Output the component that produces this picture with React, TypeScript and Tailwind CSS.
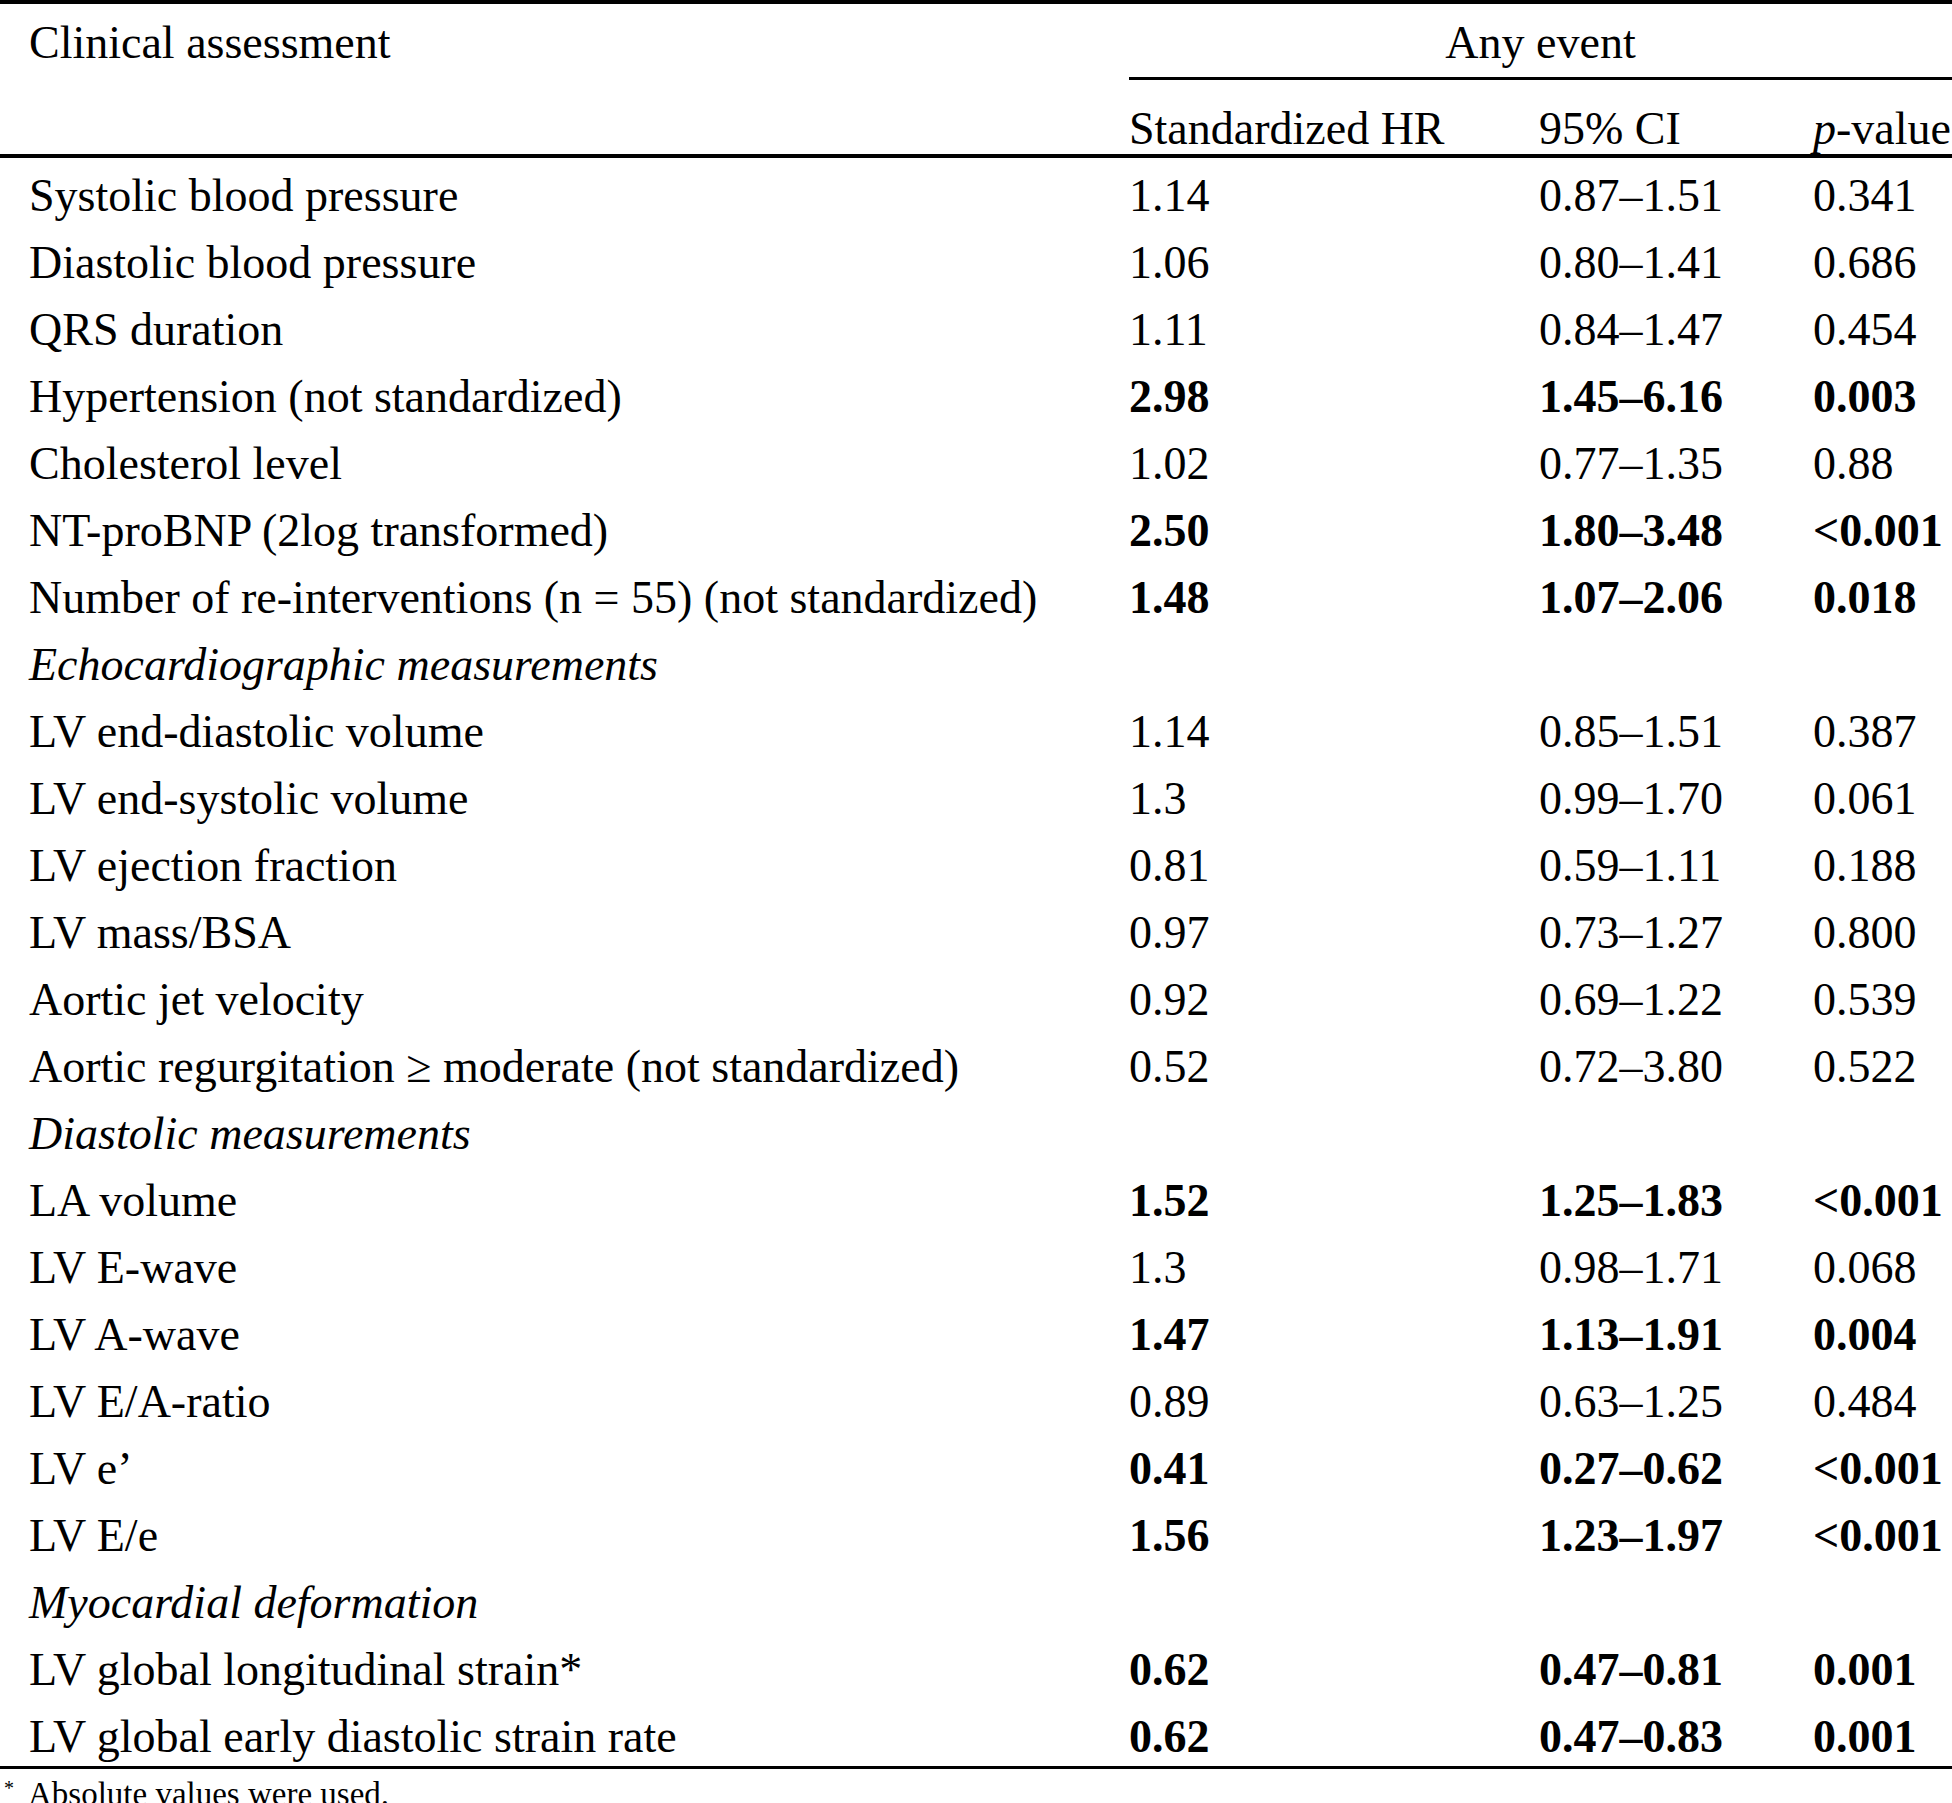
import React from "react";

type Row =
  | { kind: "section"; label: string }
  | { kind: "data"; label: string; hr: string; ci: string; p: string; bold?: boolean };

const rows: Row[] = [
  { kind: "data", label: "Systolic blood pressure", hr: "1.14", ci: "0.87–1.51", p: "0.341" },
  { kind: "data", label: "Diastolic blood pressure", hr: "1.06", ci: "0.80–1.41", p: "0.686" },
  { kind: "data", label: "QRS duration", hr: "1.11", ci: "0.84–1.47", p: "0.454" },
  { kind: "data", label: "Hypertension (not standardized)", hr: "2.98", ci: "1.45–6.16", p: "0.003", bold: true },
  { kind: "data", label: "Cholesterol level", hr: "1.02", ci: "0.77–1.35", p: "0.88" },
  { kind: "data", label: "NT-proBNP (2log transformed)", hr: "2.50", ci: "1.80–3.48", p: "<0.001", bold: true },
  { kind: "data", label: "Number of re-interventions (n = 55) (not standardized)", hr: "1.48", ci: "1.07–2.06", p: "0.018", bold: true },
  { kind: "section", label: "Echocardiographic measurements" },
  { kind: "data", label: "LV end-diastolic volume", hr: "1.14", ci: "0.85–1.51", p: "0.387" },
  { kind: "data", label: "LV end-systolic volume", hr: "1.3", ci: "0.99–1.70", p: "0.061" },
  { kind: "data", label: "LV ejection fraction", hr: "0.81", ci: "0.59–1.11", p: "0.188" },
  { kind: "data", label: "LV mass/BSA", hr: "0.97", ci: "0.73–1.27", p: "0.800" },
  { kind: "data", label: "Aortic jet velocity", hr: "0.92", ci: "0.69–1.22", p: "0.539" },
  { kind: "data", label: "Aortic regurgitation ≥ moderate (not standardized)", hr: "0.52", ci: "0.72–3.80", p: "0.522" },
  { kind: "section", label: "Diastolic measurements" },
  { kind: "data", label: "LA volume", hr: "1.52", ci: "1.25–1.83", p: "<0.001", bold: true },
  { kind: "data", label: "LV E-wave", hr: "1.3", ci: "0.98–1.71", p: "0.068" },
  { kind: "data", label: "LV A-wave", hr: "1.47", ci: "1.13–1.91", p: "0.004", bold: true },
  { kind: "data", label: "LV E/A-ratio", hr: "0.89", ci: "0.63–1.25", p: "0.484" },
  { kind: "data", label: "LV e’", hr: "0.41", ci: "0.27–0.62", p: "<0.001", bold: true },
  { kind: "data", label: "LV E/e", hr: "1.56", ci: "1.23–1.97", p: "<0.001", bold: true },
  { kind: "section", label: "Myocardial deformation" },
  { kind: "data", label: "LV global longitudinal strain*", hr: "0.62", ci: "0.47–0.81", p: "0.001", bold: true },
  { kind: "data", label: "LV global early diastolic strain rate", hr: "0.62", ci: "0.47–0.83", p: "0.001", bold: true },
];

export default function App() {
  return (
    <div className="w-[1952px] h-[1803px] overflow-hidden bg-white text-black font-['Liberation_Serif','Times_New_Roman',serif] text-[46px] leading-none">
      <div className="border-t-[4px] border-black">
        {/* Header row 1 */}
        <div className="flex h-[76px]">
          <div className="w-[1129px] pl-[29px] pt-[16px] whitespace-nowrap">Clinical assessment</div>
          <div className="flex-1 border-b-[3px] border-black text-center pt-[16px] whitespace-nowrap">Any event</div>
        </div>
        {/* Header row 2 */}
        <div className="flex h-[78px] border-b-[4px] border-black items-start pt-[26px] whitespace-nowrap">
          <div className="w-[1129px]" />
          <div className="w-[410px]">Standardized HR</div>
          <div className="w-[274px]">95% CI</div>
          <div className="flex-1">
            <span className="italic">p</span>-value
          </div>
        </div>
        {/* Body */}
        <div className="flex flex-col border-b-[3px] border-black">
          {rows.map((r, i) =>
            r.kind === "section" ? (
              <div key={i} className="flex h-[67px] items-start pt-[15px] whitespace-nowrap">
                <div className="pl-[29px] italic">{r.label}</div>
              </div>
            ) : (
              <div key={i} className="flex h-[67px] items-start pt-[15px] whitespace-nowrap">
                <div className="w-[1129px] pl-[29px]">{r.label}</div>
                <div className={`w-[410px] ${r.bold ? "font-bold" : ""}`}>{r.hr}</div>
                <div className={`w-[274px] ${r.bold ? "font-bold" : ""}`}>{r.ci}</div>
                <div className={`flex-1 ${r.bold ? "font-bold" : ""}`}>{r.p}</div>
              </div>
            )
          )}
        </div>
        <div className="flex items-start text-[33px] pt-[9px] whitespace-nowrap">
          <span className="w-[28px] pl-[4px] text-[20px] leading-none">*</span>
          <span>Absolute values were used.</span>
        </div>
      </div>
    </div>
  );
}
